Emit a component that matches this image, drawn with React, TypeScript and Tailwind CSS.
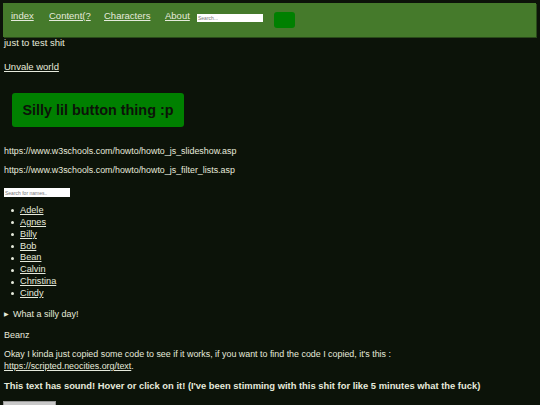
export default function App() {
  const names = ["Adele", "Agnes", "Billy", "Bob", "Bean", "Calvin", "Christina", "Cindy"];

  return (
    <div className="min-h-[405px] w-[540px] overflow-hidden bg-[#0c1309] text-[#e6eadc] font-['Liberation_Sans',Arial,sans-serif] text-[9px] leading-[12px] pl-[4px] pr-[4px]">
      {/* nav bar */}
      <nav className="mt-[3px] -ml-[1px] h-[34px] bg-[#457a2b] shadow-[1px_1px_0_#2a4a1a] flex items-center pl-[8px]">
        <div className="flex mb-[8px] text-[9.5px]">
          <a className="underline w-[38px]">index</a>
          <a className="underline w-[55px]">Content(?</a>
          <a className="underline w-[61px]">Characters</a>
          <a className="underline w-[31px]">About</a>
        </div>
        <input
          className="ml-[1px] mb-[4px] w-[66px] h-[8px] bg-white text-[5px] text-black px-[1px] outline-none placeholder:text-[#777]"
          placeholder="Search..."
        />
        <button className="ml-[11px] w-[21px] h-[16px] rounded-[3px] bg-[#008000]"></button>
      </nav>

      <p className="h-[12px] text-[9.5px]">just to test shit</p>
      <p className="mt-[12px] h-[12px] text-[9.5px]">
        <a className="underline">Unvale world</a>
      </p>

      <button className="mt-[20px] ml-[8px] w-[172px] h-[34px] rounded-[3px] bg-[#008000] text-[#0c1309] font-bold text-[14.4px] flex items-center justify-center">
        Silly lil button thing :p
      </button>

      <p className="mt-[18px] h-[12px] text-[8.9px]">https://www.w3schools.com/howto/howto_js_slideshow.asp</p>
      <p className="mt-[7px] h-[12px] text-[8.9px]">https://www.w3schools.com/howto/howto_js_filter_lists.asp</p>

      <input
        className="mt-[12px] block w-[66px] h-[9px] bg-white text-[5px] text-black px-[1px] outline-none placeholder:text-[#777]"
        placeholder="Search for names.."
      />

      <ul className="mt-[8px] leading-[11.86px] text-[9.2px]">
        {names.map((n) => (
          <li key={n} className="flex items-center">
            <span className="ml-[7px] w-[3px] h-[3px] rounded-full bg-[#e6eadc]"></span>
            <a className="underline ml-[6px]">{n}</a>
          </li>
        ))}
      </ul>

      <div className="mt-[8px] h-[12px] flex items-center gap-[4px]">
        <span className="text-[6px]">▶</span>
        <span>What a silly day!</span>
      </div>

      <p className="mt-[9px] h-[12px]">Beanz</p>

      <p className="mt-[7px] text-[8.9px]">
        Okay I kinda just copied some code to see if it works, if you want to find the code I copied, it's this :
        <br />
        <a className="underline">https://scripted.neocities.org/text</a>.
      </p>

      <p className="mt-[8px] h-[12px] font-bold text-[9.4px]">
        This text has sound! Hover or click on it! (I've been stimming with this shit for like 5 minutes what the fuck)
      </p>

      <button className="mt-[9px] -ml-[1px] w-[53px] h-[14px] bg-[#c8c8c8] text-[#222] text-[8px] leading-[14px] text-left pl-[3px] border border-[#999]">
        Play button
      </button>
    </div>
  );
}
